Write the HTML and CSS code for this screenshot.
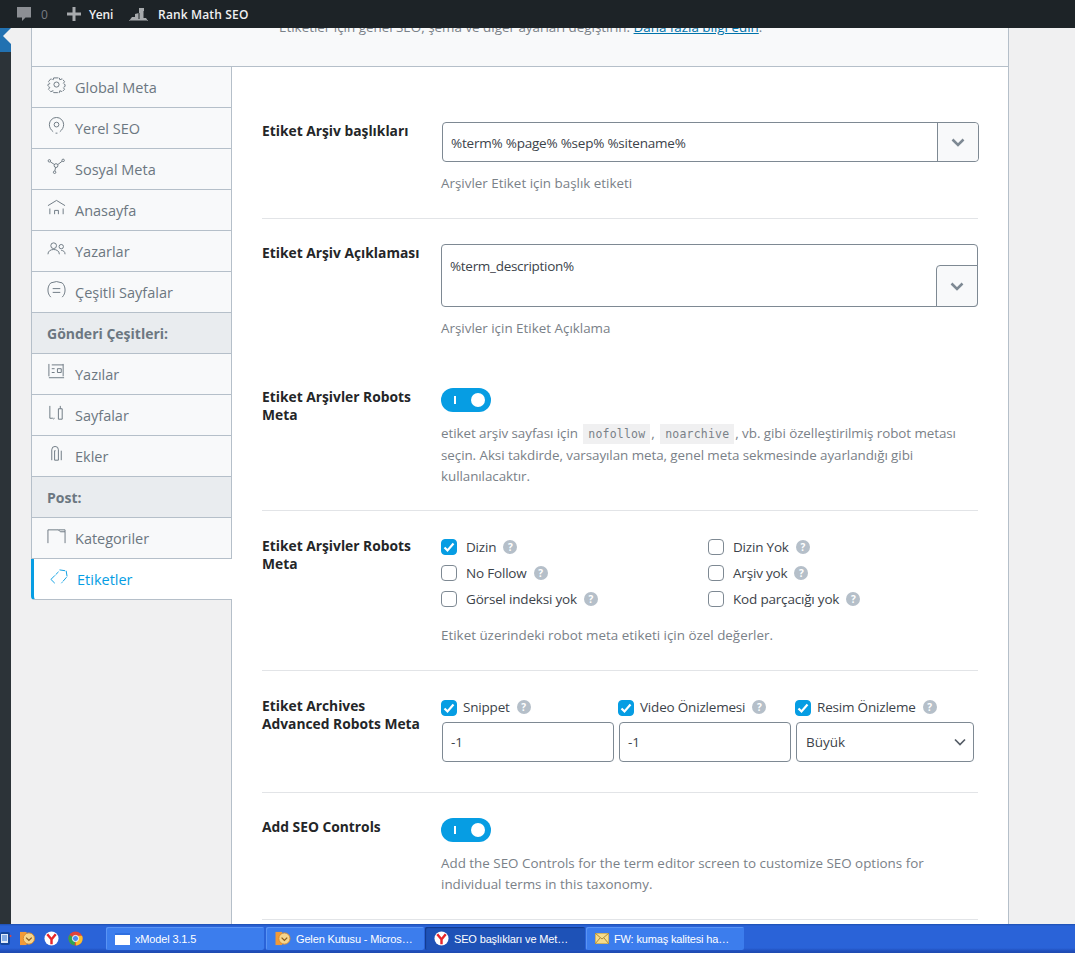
FILE: index.html
```html
<!DOCTYPE html>
<html lang="tr">
<head>
<meta charset="utf-8">
<title>Rank Math SEO</title>
<link rel="stylesheet" href="styles.css">
</head>
<body>
<header class="adminbar">
  <span class="bar-item bar-comments">
    <svg class="bar-icon" width="15" height="16" viewBox="0 0 15 16"><path d="M0 1h14v10.500H8.500L5 15v-3.500H0z" fill="#8c8f94"/></svg>
    <span class="bar-count">0</span>
  </span>
  <span class="bar-item bar-new">
    <svg class="bar-icon" width="14" height="14" viewBox="0 0 14 14"><path d="M5.500 0h3v5.500H14v3H8.500V14h-3V8.500H0v-3h5.500z" fill="#a7aaad"/></svg>
    <span>Yeni</span>
  </span>
  <span class="bar-item bar-rank">
    <svg class="bar-icon" width="20" height="15" viewBox="0 0 20 15"><path d="M0 14l3-4h3V7l4-1V1h5v10h2l2 3z" fill="#a7aaad"/><path d="M1 14h17" stroke="#1d2327"/><path d="M10 6v6M15 4v7" stroke="#1d2327"/></svg>
    <span>Rank Math SEO</span>
  </span>
</header>

<div class="workspace">
  <aside class="wpmenu"><div class="wpmenu-current"></div></aside>
  <main class="panel">
    <div class="panel-head">
      <p class="panel-intro">Etiketler için genel SEO, şema ve diğer ayarları değiştirin. <a href="#">Daha fazla bilgi edin</a>.</p>
    </div>
    <div class="panel-body">
      <nav class="tabs">
        <a class="tab" href="#"><svg class="tab-icon" viewBox="0 0 20 20"><circle cx="10" cy="9" r="2.700"/><path d="M7 2h6l.5 2 2.500-1 2.500 3-1.500 2 2 1v2l-2 1 1.500 2-2.500 2.500-2.500-1-.5 2H7l-.5-2-2.500 1L1.500 14 3 12l-2-1V9l2-1-1.500-2L4 3l2.500 1z" stroke-dasharray="5 1"/></svg>Global Meta</a>
        <a class="tab" href="#"><svg class="tab-icon" viewBox="0 0 20 20"><circle cx="10" cy="8" r="2.500"/><path d="M6.500 15.500C4 13.500 2.500 11 2.500 8a7.500 7.500 0 0 1 15 0c0 3-1.500 5.500-4 7.500M9 17h2"/></svg>Yerel SEO</a>
        <a class="tab" href="#"><svg class="tab-icon" viewBox="0 0 20 20"><circle cx="2.500" cy="3" r="1.300"/><circle cx="17" cy="2.500" r="1.300"/><circle cx="9.500" cy="8" r="2"/><circle cx="8" cy="15" r="1.300"/><path d="M3.500 4l4.500 3M11.300 7l4.500-3.500M9 10l-.7 3.500"/></svg>Sosyal Meta</a>
        <a class="tab" href="#"><svg class="tab-icon" viewBox="0 0 20 20"><path d="M1 7l9-5.500L19 7M3 10v6M17 10v6M8 16v-4h4v4"/></svg>Anasayfa</a>
        <a class="tab" href="#"><svg class="tab-icon" viewBox="0 0 20 20"><circle cx="7" cy="6" r="3"/><circle cx="15" cy="7" r="2.300"/><path d="M1 15c0-3.500 3-5 6-5s6 1.500 6 5M15 11c2 0 4 1 4 4"/></svg>Yazarlar</a>
        <a class="tab" href="#"><svg class="tab-icon" viewBox="0 0 20 20"><path d="M4 2C2 4 1 6.500 1 9.500S2 15 4 17M16 2c2 2 3 4.500 3 7.500S18 15 16 17M6 8h8M6 12h8M4 2a14 14 0 0 1 12 0"/></svg>Çeşitli Sayfalar</a>
        <div class="tab-heading">Gönderi Çeşitleri:</div>
        <a class="tab" href="#"><svg class="tab-icon" viewBox="0 0 20 20"><path d="M2 1v13M2 15.500h16M17 1v13M5 2h12M5 6h3M5 10h3M11 6h4v4h-4z"/></svg>Yazılar</a>
        <a class="tab" href="#"><svg class="tab-icon" viewBox="0 0 20 20"><path d="M3 2v13h3l1 1M7 15h1M12 5h4v11h-4zM14 2v3"/></svg>Sayfalar</a>
        <a class="tab" href="#"><svg class="tab-icon" viewBox="0 0 20 20"><path d="M5 16V5a3.500 3.500 0 0 1 7 0v11H8V6h1M15 6v10"/></svg>Ekler</a>
        <div class="tab-heading">Post:</div>
        <a class="tab" href="#"><svg class="tab-icon" viewBox="0 0 20 20"><path d="M1 17V3h11l2 2h5v12M12 3h7v2"/></svg>Kategoriler</a>
        <a class="tab tab-active" href="#"><svg class="tab-icon" viewBox="0 0 20 20"><path d="M1 12L9 4M1 12l4 4M10 2l7 1 1 6-6 7" stroke-dasharray="6 1"/></svg>Etiketler</a>
      </nav>

      <section class="content">
        <div class="row row-title">
          <div class="row-label">Etiket Arşiv başlıkları</div>
          <div class="row-field">
            <div class="select-input">
              <span class="select-value">%term% %page% %sep% %sitename%</span>
              <span class="select-btn"><svg width="14" height="9" viewBox="0 0 14 9"><path d="M1.500 1.500L7 7l5.500-5.500" class="chev"/></svg></span>
            </div>
            <p class="desc desc-title">Arşivler Etiket için başlık etiketi</p>
          </div>
        </div>

        <div class="row row-descr">
          <div class="row-label">Etiket Arşiv Açıklaması</div>
          <div class="row-field">
            <div class="area-input">
              <span class="area-value">%term_description%</span>
              <span class="area-btn"><svg width="14" height="9" viewBox="0 0 14 9"><path d="M1.500 1.500L7 7l5.500-5.500" class="chev"/></svg></span>
            </div>
            <p class="desc desc-title">Arşivler için Etiket Açıklama</p>
          </div>
        </div>

        <div class="row row-robots">
          <div class="row-label">Etiket Arşivler Robots Meta</div>
          <div class="row-field">
            <span class="toggle"><i class="toggle-bar"></i><i class="toggle-knob"></i></span>
            <p class="desc desc-toggle">etiket arşiv sayfası için <code>nofollow</code>, <code>noarchive</code>, vb. gibi özelleştirilmiş robot metası seçin. Aksi takdirde, varsayılan meta, genel meta sekmesinde ayarlandığı gibi kullanılacaktır.</p>
          </div>
        </div>

        <div class="row row-checks">
          <div class="row-label">Etiket Arşivler Robots Meta</div>
          <div class="row-field">
            <div class="check-grid">
              <span class="check-item"><i class="box box-on"><svg width="16" height="16" viewBox="0 0 16 16"><path d="M3.500 8.500l3 3 6-7" class="tick"/></svg></i>Dizin<i class="help">?</i></span>
              <span class="check-item"><i class="box"></i>Dizin Yok<i class="help">?</i></span>
              <span class="check-item"><i class="box"></i>No Follow<i class="help">?</i></span>
              <span class="check-item"><i class="box"></i>Arşiv yok<i class="help">?</i></span>
              <span class="check-item"><i class="box"></i>Görsel indeksi yok<i class="help">?</i></span>
              <span class="check-item"><i class="box"></i>Kod parçacığı yok<i class="help">?</i></span>
            </div>
            <p class="desc desc-checks">Etiket üzerindeki robot meta etiketi için özel değerler.</p>
          </div>
        </div>

        <div class="row row-adv">
          <div class="row-label">Etiket Archives Advanced Robots Meta</div>
          <div class="adv-grid">
            <div class="adv-col">
              <span class="adv-check"><i class="box box-on"><svg width="16" height="16" viewBox="0 0 16 16"><path d="M3.500 8.500l3 3 6-7" class="tick"/></svg></i>Snippet<i class="help">?</i></span>
              <div class="adv-input">-1</div>
            </div>
            <div class="adv-col">
              <span class="adv-check"><i class="box box-on"><svg width="16" height="16" viewBox="0 0 16 16"><path d="M3.500 8.500l3 3 6-7" class="tick"/></svg></i>Video Önizlemesi<i class="help">?</i></span>
              <div class="adv-input">-1</div>
            </div>
            <div class="adv-col">
              <span class="adv-check"><i class="box box-on"><svg width="16" height="16" viewBox="0 0 16 16"><path d="M3.500 8.500l3 3 6-7" class="tick"/></svg></i>Resim Önizleme<i class="help">?</i></span>
              <div class="adv-input adv-select">Büyük<svg width="12" height="8" viewBox="0 0 12 8"><path d="M1 1.500l5 5 5-5" class="chev-dark"/></svg></div>
            </div>
          </div>
        </div>

        <div class="row row-seo">
          <div class="row-label">Add SEO Controls</div>
          <div class="row-field">
            <span class="toggle"><i class="toggle-bar"></i><i class="toggle-knob"></i></span>
            <p class="desc desc-seo">Add the SEO Controls for the term editor screen to customize SEO options for individual terms in this taxonomy.</p>
          </div>
        </div>
      </section>
    </div>
  </main>
</div>

<footer class="taskbar">
  <div class="quick">
    <svg class="quick-ie" width="12" height="16" viewBox="0 0 12 16"><rect x="0" y="1" width="10" height="13" rx="2" fill="#14479e"/><rect x="1" y="3" width="7" height="9" fill="#dfeaf8"/><path d="M2 5h5M2 7h5M2 9h5" stroke="#2a6fd0"/><circle cx="10.500" cy="5" r="1" fill="#e0433a"/></svg>
    <svg class="quick-app" viewBox="0 0 16 16"><rect x="0" y="1" width="7" height="14" fill="#f39a37"/><circle cx="9.500" cy="8" r="6" fill="#f6d58d" stroke="#d98a2b"/><path d="M6.500 7l3 3 3-3" stroke="#8a5a1a" fill="none" stroke-width="1.300"/></svg>
    <svg class="quick-app" viewBox="0 0 16 16"><circle cx="8" cy="8" r="7.500" fill="#fff"/><path d="M3.500 3.500L8 9l4.500-5.500M8 9v5" stroke="#e8262a" stroke-width="2.600" fill="none"/></svg>
    <svg class="quick-app" viewBox="0 0 16 16"><circle cx="8" cy="8" r="7.500" fill="#e0433a"/><path d="M8 8L1.500 4.200A7.500 7.500 0 0 0 7 15.400z" fill="#2fa44f"/><path d="M8 8l.5 7.500A7.500 7.500 0 0 0 15 5H8z" fill="#fbc02d"/><circle cx="8" cy="8" r="3.300" fill="#4a8af4" stroke="#fff"/></svg>
  </div>
  <div class="tasks">
    <span class="task"><svg width="15" height="12" viewBox="0 0 15 12"><rect width="15" height="12" fill="#fff"/><rect width="15" height="2" fill="#2f6fe0"/></svg><span class="task-text">xModel 3.1.5</span></span>
    <span class="task"><svg width="16" height="15" viewBox="0 0 16 16"><rect x="0" y="1" width="7" height="14" fill="#f39a37"/><circle cx="9.500" cy="8" r="6" fill="#f6d58d" stroke="#d98a2b"/><path d="M6.500 7l3 3 3-3" stroke="#8a5a1a" fill="none" stroke-width="1.300"/></svg><span class="task-text">Gelen Kutusu - Micros…</span></span>
    <span class="task task-current"><svg width="15" height="15" viewBox="0 0 16 16"><circle cx="8" cy="8" r="7.500" fill="#fff"/><path d="M3.500 3.500L8 9l4.500-5.500M8 9v5" stroke="#e8262a" stroke-width="2.600" fill="none"/></svg><span class="task-text">SEO başlıkları ve Met…</span></span>
    <span class="task"><svg width="14" height="11" viewBox="0 0 14 11"><rect width="14" height="11" fill="#f6dc8c" stroke="#a98a3a"/><path d="M0 0l7 6 7-6M0 11l5-6M14 11L9 5" stroke="#a98a3a" fill="none"/></svg><span class="task-text">FW: kumaş kalitesi ha…</span></span>
  </div>
</footer>
<div class="below"></div>
</body>
</html>
```

FILE: styles.css
```css
* { box-sizing: border-box; }
html, body { margin: 0; padding: 0; }
body {
  width: 1075px;
  height: 975px;
  overflow: hidden;
  display: flex;
  flex-direction: column;
  background: #fff;
  font-family: "Open Sans", "Liberation Sans", sans-serif;
  font-size: 13px;
  color: #3c434a;
}
p { margin: 0; }

.adminbar {
  flex: 0 0 28px;
  height: 28px;
  background: #1d2327;
  display: flex;
  align-items: center;
  color: #f0f0f1;
  font-size: 12px;
  font-weight: 600;
}
.bar-item { display: flex; align-items: center; }
.bar-comments { margin-left: 17px; color: #787c82; font-weight: 400; }
.bar-count { margin-left: 9px; }
.bar-new { margin-left: 19px; }
.bar-new span { margin-left: 8px; letter-spacing: -0.2px; }
.bar-rank { margin-left: 16px; }
.bar-rank span { margin-left: 9px; letter-spacing: 0.15px; }

.workspace {
  flex: 0 0 896px;
  display: flex;
  background: #f0f0f1;
  overflow: hidden;
}
.wpmenu { flex: 0 0 11px; background: #2c3338; }
.wpmenu-current {
  height: 24px;
  background: #2271b1;
  position: relative;
}
.wpmenu-current::after {
  content: "";
  position: absolute;
  left: 3px;
  top: 0;
  border-style: solid;
  border-width: 8px 8px 8px 0;
  border-color: transparent #f0f0f1 transparent transparent;
}
.panel {
  margin-left: 20px;
  width: 978px;
  display: flex;
  flex-direction: column;
}
.panel-head {
  flex: 0 0 39px;
  height: 39px;
  background: #f8f9fa;
  border-left: 1px solid #b5bfc9;
  border-right: 1px solid #b5bfc9;
  border-bottom: 1px solid #b5bfc9;
  overflow: hidden;
  padding-left: 247px;
}
.panel-intro {
  margin-top: -10px;
  font-size: 13.400px;
  line-height: 18px;
  color: #7a8188;
  white-space: nowrap;
}
.panel-intro a { color: #0073aa; }
.panel-body { flex: 1; display: flex; min-height: 0; }

.tabs {
  flex: 0 0 201px;
  display: flex;
  flex-direction: column;
  border-right: 1px solid #b5bfc9;
}
.tab, .tab-heading {
  height: 41px;
  flex: 0 0 41px;
  display: flex;
  align-items: center;
  border-left: 1px solid #b5bfc9;
  border-bottom: 1px solid #b5bfc9;
  background: #f8f9fa;
  padding-left: 15px;
  color: #6c7781;
  font-size: 14.500px;
  text-decoration: none;
}
.tab-heading {
  background: #e9ecef;
  font-weight: 700;
  font-size: 14px;
}
.tab-icon {
  width: 19px;
  height: 19px;
  margin-right: 9px;
  margin-top: -4px;
  fill: none;
  stroke: #6c7781;
  stroke-width: 1;
  flex: none;
}
.tab-active {
  background: #fff;
  color: #069de3;
  border-left: 3px solid #069de3;
  border-bottom-left-radius: 4px;
  margin-right: -1px;
  padding-left: 16px;
  position: relative;
}
.tab-active .tab-icon { stroke: #069de3; margin-right: 8px; }

.content {
  flex: 1;
  background: #fff;
  padding: 0 30px;
  border-right: 1px solid #b5bfc9;
  color: #242628;
  min-width: 0;
}
.row { display: flex; }
.row-label {
  flex: 0 0 179px;
  font-size: 13.800px;
  font-weight: 700;
  line-height: 18px;
  color: #242628;
  padding-right: 14px;
}
.row-field { flex: 1; min-width: 0; }
.row-title { padding-top: 55px; height: 152px; border-bottom: 1px solid #e2e4e7; }
.row-descr { padding-top: 25px; height: 169px; }
.row-robots { height: 123px; border-bottom: 1px solid #e2e4e7; }
.row-checks { padding-top: 26px; height: 160px; border-bottom: 1px solid #e2e4e7; }
.row-adv { padding-top: 26px; height: 122px; border-bottom: 1px solid #e2e4e7; }
.row-seo { padding-top: 25px; height: 127px; border-bottom: 1px solid #e2e4e7; }

.select-input {
  margin: 0 -1px 0 1px;
  height: 40px;
  border: 1px solid #7e8993;
  border-radius: 4px;
  display: flex;
  align-items: center;
}
.select-value {
  flex: 1;
  padding: 1px 0 0 8px;
  font-size: 13.500px;
  letter-spacing: -0.22px;
  color: #3c434a;
}
.select-btn {
  flex: 0 0 41px;
  height: 100%;
  border-left: 1px solid #7e8993;
  background: #f8f9fa;
  display: flex;
  align-items: center;
  justify-content: center;
  border-radius: 0 4px 4px 0;
}
.chev { fill: none; stroke: #7e8993; stroke-width: 2.500; }
.chev-dark { fill: none; stroke: #555d66; stroke-width: 1.700; }
.area-input {
  position: relative;
  height: 63px;
  border: 1px solid #7e8993;
  border-radius: 4px;
  padding: 11px 8px;
  font-size: 13.500px;
  line-height: 20px;
  letter-spacing: -0.3px;
  color: #3c434a;
}
.area-value { display: block; }
.area-btn {
  position: absolute;
  right: -1px;
  bottom: -1px;
  width: 42px;
  height: 42px;
  border: 1px solid #7e8993;
  border-radius: 4px 0 4px 0;
  background: #f8f9fa;
  display: flex;
  align-items: center;
  justify-content: center;
}
.desc {
  font-size: 13.400px;
  line-height: 21px;
  color: #7a8188;
}
.desc-title { margin-top: 11px; }
.desc-toggle { margin-top: 11px; letter-spacing: -0.06px; }
.desc-toggle code {
  font-family: "DejaVu Sans Mono", monospace;
  font-size: 11.500px;
  letter-spacing: 0.2px;
  background: #f0f0f1;
  padding: 3px 5px;
  margin: 0 1px 0 2px;
}
.desc-checks { margin-top: 17px; }
.desc-seo { margin-top: 11px; }

.toggle {
  display: block;
  position: relative;
  width: 50px;
  height: 24px;
  border-radius: 12px;
  background: #069de3;
}
.toggle-bar {
  position: absolute;
  left: 13px;
  top: 8px;
  width: 2px;
  height: 8px;
  background: #fff;
}
.toggle-knob {
  position: absolute;
  left: 30px;
  top: 5px;
  width: 14px;
  height: 14px;
  border-radius: 50%;
  background: #fff;
}

.check-grid {
  display: grid;
  grid-template-columns: 267px 1fr;
  row-gap: 8px;
  padding-top: 1px;
}
.check-item, .adv-check {
  display: flex;
  align-items: center;
  height: 18px;
  font-size: 13.500px;
  letter-spacing: -0.19px;
  color: #3c434a;
  font-style: normal;
}
.box {
  flex: none;
  display: block;
  width: 16px;
  height: 16px;
  border: 1px solid #7e8993;
  border-radius: 4px;
  margin-right: 9px;
  background: #fff;
}
.box-on { background: #069de3; border-color: #069de3; }
.box-on svg { display: block; margin: -1px; }
.tick { fill: none; stroke: #fff; stroke-width: 2.200; }
.help {
  flex: none;
  display: block;
  width: 14px;
  height: 14px;
  margin-left: 7px;
  border-radius: 50%;
  background: #b5bfc9;
  color: #fff;
  font-style: normal;
  font-weight: 700;
  font-size: 10px;
  line-height: 14px;
  text-align: center;
  letter-spacing: 0;
}
.adv-grid {
  flex: 1;
  display: grid;
  grid-template-columns: 172px 172px 178px;
  column-gap: 5px;
  margin-left: 1px;
}
.adv-col { display: flex; flex-direction: column; }
.adv-check { height: 16px; margin-left: -1px; margin-top: 2px; margin-bottom: 7px; }
.adv-check .box { margin-right: 6px; margin-top: 2px; }
.adv-input {
  height: 40px;
  border: 1px solid #7e8993;
  border-radius: 4px;
  padding-left: 8px;
  display: flex;
  align-items: center;
  justify-content: space-between;
  font-size: 13.500px;
  color: #3c434a;
}
.adv-select { padding-left: 9px; padding-right: 7px; }

.taskbar {
  flex: 0 0 29px;
  height: 29px;
  display: flex;
  background: linear-gradient(#1d4fb0 0, #2a63d8 2px, #2a63d8 24px, #1f4ebb 27px, #1e4aaf 100%);
  overflow: hidden;
}
.quick { flex: 0 0 106px; display: flex; align-items: center; position: relative; padding-left: 20px; gap: 9px; }
.quick-ie { position: absolute; left: 0; top: 7px; }
.quick-app { flex: none; width: 15px; height: 15px; }
.tasks { display: flex; padding-top: 3px; gap: 1px; }
.task {
  width: 158px;
  height: 23px;
  display: flex;
  align-items: center;
  gap: 5px;
  padding-left: 9px;
  background: #3c7ded;
  border-radius: 2px;
  color: #fff;
  font-family: "Liberation Sans", sans-serif;
  font-size: 11px;
  letter-spacing: -0.15px;
  box-shadow: inset 1px 1px 0 #5a94f4;
}
.task:nth-child(2) { margin-left: 1px; }
.task-current {
  width: 160px;
  background: #1e52b7;
  box-shadow: inset 1px 1px 1px #123a8c;
}
.task-text { white-space: nowrap; }
.below { flex: 1; background: #fff; }
```
